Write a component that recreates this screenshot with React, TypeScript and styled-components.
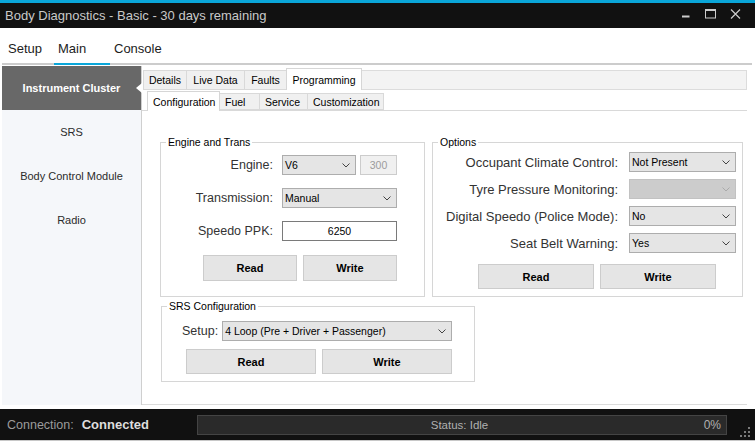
import React from "react";
import styled, { createGlobalStyle, css } from "styled-components";

const GlobalStyle = createGlobalStyle`
  html, body { margin: 0; padding: 0; background: #ffffff; }
  body { font-family: "Liberation Sans", Arial, sans-serif; }
  * { box-sizing: border-box; }
`;

const CYAN = "#0aa6d9";

const Window = styled.div`
  width: 755px;
  height: 441px;
  display: flex;
  flex-direction: column;
  background: #fff;
  overflow: hidden;
`;

const TitleBar = styled.div`
  height: 28px;
  border-top: 3px solid ${CYAN};
  background: #111111;
  display: flex;
  align-items: center;
  justify-content: space-between;
  padding-left: 5px;
  padding-right: 7px;
`;

const Title = styled.div`
  color: #c9c9c9;
  font-size: 13px;
  white-space: nowrap;
`;

const WinButtons = styled.div`
  display: flex;
  align-self: stretch;
`;

const WinButton = styled.div`
  width: 25px;
  display: flex;
  justify-content: center;
  padding-top: 6px;
`;

const MenuBar = styled.div`
  height: 37px;
  margin: 0 3px 0 2px;
  padding-left: 2px;
  border-bottom: 2px solid #cccccc;
  display: flex;
`;

const MenuItem = styled.div<{ $w?: number; $active?: boolean }>`
  ${(p) => (p.$w ? `width: ${p.$w}px;` : "")}
  padding: 5px 0 0 4px;
  margin-bottom: -2px;
  display: flex;
  align-items: center;
  font-size: 13px;
  color: #1c1c1c;
  border-bottom: 2px solid ${(p) => (p.$active ? CYAN : "transparent")};
`;

const Body = styled.div`
  display: flex;
  height: 340px;
  padding-top: 1px;
  margin: 0 8px 4px 2px;
`;

const Sidebar = styled.div`
  width: 140px;
  background: #f5f7fa;
  border-right: 1px solid #cfcfcf;
  display: flex;
  flex-direction: column;
`;

const SideItem = styled.div<{ $active?: boolean }>`
  position: relative;
  height: 44px;
  display: flex;
  align-items: center;
  justify-content: center;
  font-size: 11px;
  color: #2b2b2b;
  ${(p) =>
    p.$active &&
    css`
      background: #686868;
      color: #ffffff;
      font-weight: bold;
      &::after {
        content: "";
        position: absolute;
        right: -1px;
        top: 50%;
        transform: translateY(-50%);
        border-top: 5px solid transparent;
        border-bottom: 5px solid transparent;
        border-right: 6px solid #ffffff;
      }
    `}
`;

const MainPanel = styled.div`
  flex: 1;
  display: flex;
  flex-direction: column;
  padding-top: 2px;
`;

const TopTabRow = styled.div`
  display: flex;
  align-items: flex-start;
  height: 22px;
  padding-left: 1px;
`;

const TopTab = styled.div<{ $active?: boolean; $w: number }>`
  width: ${(p) => p.$w}px;
  display: flex;
  align-items: center;
  justify-content: center;
  font-size: 10.5px;
  color: #000;
  white-space: nowrap;
  ${(p) =>
    p.$active
      ? css`
          height: 22px;
          background: #ffffff;
          border: 1px solid #d6d6d6;
          border-bottom: none;
        `
      : css`
          margin-top: 2px;
          height: 20px;
          background: #f0f0f0;
          border: 1px solid #d9d9d9;
          border-right: none;
        `}
`;

const TabFiller = styled.div`
  flex: 1;
  margin-top: 2px;
  height: 20px;
  background: #f3f3f3;
  border: 1px solid #dcdcdc;
  border-left: none;
`;

const SubTabRow = styled.div`
  display: flex;
  align-items: flex-start;
  height: 20px;
  margin-top: 1px;
  padding-left: 5px;
  border-bottom: 1px solid #d9d9d9;
`;

const SubTab = styled.div<{ $active?: boolean; $w: number }>`
  width: ${(p) => p.$w}px;
  display: flex;
  align-items: center;
  font-size: 10.5px;
  color: #000;
  white-space: nowrap;
  padding-left: 5px;
  ${(p) =>
    p.$active
      ? css`
          height: 20px;
          background: #ffffff;
          border: 1px solid #d6d6d6;
          border-bottom: none;
        `
      : css`
          margin-top: 2px;
          height: 17px;
          background: #f0f0f0;
          border: 1px solid #d9d9d9;
          border-left: none;
        `}
`;

const Page = styled.div`
  flex: 1;
  border-bottom: 1px solid #dcdcdc;
  padding: 25px 0 0 18px;
  display: flex;
  flex-direction: column;
`;

const GroupRow = styled.div`
  display: flex;
  gap: 7px;
`;

const Group = styled.fieldset<{ $w: number; $h: number; $mt?: number; $ml?: number }>`
  margin: ${(p) => p.$mt ?? 0}px 0 0 ${(p) => p.$ml ?? 0}px;
  padding: 0;
  min-width: 0;
  width: ${(p) => p.$w}px;
  height: ${(p) => p.$h}px;
  border: 1px solid #d6d6d6;
`;

const Legend = styled.legend`
  margin-left: 5px;
  padding: 0 2px;
  font-size: 10.5px;
  line-height: 13px;
  color: #000;
`;

const FormGrid = styled.div<{ $cols: string; $pl: number; $pt: number; $gap: number; $cg: number }>`
  display: grid;
  grid-template-columns: ${(p) => p.$cols};
  column-gap: ${(p) => p.$cg}px;
  row-gap: ${(p) => p.$gap}px;
  align-items: center;
  padding: ${(p) => p.$pt}px 0 0 ${(p) => p.$pl}px;
`;

const FieldLabel = styled.span<{ $size?: number }>`
  font-size: ${(p) => p.$size ?? 12.5}px;
  color: #333333;
  text-align: right;
  white-space: nowrap;
`;

const SelectBox = styled.div<{ $w?: number; $disabled?: boolean }>`
  height: 20px;
  ${(p) => (p.$w ? `width: ${p.$w}px;` : "")}
  display: flex;
  align-items: center;
  justify-content: space-between;
  padding: 0 5px 0 2px;
  font-size: 10.5px;
  color: #000;
  white-space: nowrap;
  background: ${(p) => (p.$disabled ? "#cccccc" : "#e5e5e5")};
  border: 1px solid ${(p) => (p.$disabled ? "#c2c2c2" : "#adadad")};
`;

const InlineRow = styled.div<{ $gap: number }>`
  display: flex;
  align-items: center;
  gap: ${(p) => p.$gap}px;
`;

const TextBox = styled.div<{ $w?: number; $disabled?: boolean }>`
  height: 20px;
  ${(p) => (p.$w ? `width: ${p.$w}px;` : "")}
  display: flex;
  align-items: center;
  justify-content: center;
  font-size: 10.5px;
  color: ${(p) => (p.$disabled ? "#9c9c9c" : "#000")};
  background: ${(p) => (p.$disabled ? "#f0f0f0" : "#ffffff")};
  border: 1px solid ${(p) => (p.$disabled ? "#cccccc" : "#7a7a7a")};
`;

const ButtonRow = styled.div<{ $pl: number; $mt: number; $span?: boolean }>`
  display: flex;
  gap: 6px;
  padding-left: ${(p) => p.$pl}px;
  margin-top: ${(p) => p.$mt}px;
  ${(p) => (p.$span ? "grid-column: 1 / -1;" : "")}
`;

const Button = styled.div<{ $w: number; $h?: number }>`
  width: ${(p) => p.$w}px;
  height: ${(p) => p.$h ?? 25}px;
  display: flex;
  align-items: center;
  justify-content: center;
  font-size: 11px;
  font-weight: bold;
  color: #000;
  background: #e5e5e5;
  border: 1px solid #cccccc;
`;

const SrsBody = styled.div`
  display: flex;
  flex-direction: column;
  padding: 8px 0 0 20px;
`;

const StatusBar = styled.div`
  height: 32px;
  background: #111111;
  border-bottom: 1px solid #c8c8c8;
  display: flex;
  align-items: center;
  padding-left: 7px;
`;

const ConnLabel = styled.span`
  font-size: 12.5px;
  color: #9b9b9b;
`;

const ConnValue = styled.span`
  margin-left: 8px;
  font-size: 13px;
  font-weight: bold;
  color: #dedede;
`;

const Progress = styled.div`
  margin-left: auto;
  width: 530px;
  height: 20px;
  background: #2a2a2a;
  border: 1px solid #444444;
  display: grid;
  grid-template-columns: 1fr auto 1fr;
  align-items: center;
  padding-right: 5px;
  font-size: 11.5px;
  color: #b0b0b0;
`;

const Percent = styled.span`
  justify-self: end;
  font-size: 12px;
`;

const Grip = styled.svg`
  align-self: flex-end;
  margin: 0 5px 3px 13px;
`;

const Chevron = ({ light }: { light?: boolean }) => (
  <svg width="8" height="5" viewBox="0 0 8 5">
    <polyline points="0.5,0.5 4,4 7.5,0.5" fill="none" stroke={light ? "#aaaaaa" : "#444444"} strokeWidth="1" />
  </svg>
);

const Select = ({ value, w, disabled }: { value: string; w?: number; disabled?: boolean }) => (
  <SelectBox $w={w} $disabled={disabled}>
    <span>{value}</span>
    <Chevron light={disabled} />
  </SelectBox>
);

export default function App() {
  return (
    <>
      <GlobalStyle />
      <Window>
        <TitleBar>
          <Title>Body Diagnostics - Basic - 30 days remaining</Title>
          <WinButtons>
            <WinButton>
              <svg width="11" height="11" viewBox="0 0 11 11">
                <rect x="2" y="6.5" width="7.5" height="2" fill="#cccccc" />
              </svg>
            </WinButton>
            <WinButton>
              <svg width="11" height="11" viewBox="0 0 11 11">
                <rect x="0.5" y="0.5" width="10" height="8.5" fill="none" stroke="#cccccc" />
                <rect x="0" y="0" width="11" height="2" fill="#cccccc" />
              </svg>
            </WinButton>
            <WinButton>
              <svg width="11" height="11" viewBox="0 0 11 11">
                <path d="M1 0.5 L10 9.5 M10 0.5 L1 9.5" stroke="#cccccc" strokeWidth="1.2" />
              </svg>
            </WinButton>
          </WinButtons>
        </TitleBar>

        <MenuBar>
          <MenuItem $w={50}>Setup</MenuItem>
          <MenuItem $w={56} $active>Main</MenuItem>
          <MenuItem>Console</MenuItem>
        </MenuBar>

        <Body>
          <Sidebar>
            <SideItem $active>Instrument Cluster</SideItem>
            <SideItem>SRS</SideItem>
            <SideItem>Body Control Module</SideItem>
            <SideItem>Radio</SideItem>
          </Sidebar>

          <MainPanel>
            <TopTabRow>
              <TopTab $w={43}>Details</TopTab>
              <TopTab $w={58}>Live Data</TopTab>
              <TopTab $w={42}>Faults</TopTab>
              <TopTab $w={76} $active>Programming</TopTab>
              <TabFiller />
            </TopTabRow>
            <SubTabRow>
              <SubTab $w={73} $active>Configuration</SubTab>
              <SubTab $w={40}>Fuel</SubTab>
              <SubTab $w={48}>Service</SubTab>
              <SubTab $w={76}>Customization</SubTab>
            </SubTabRow>

            <Page>
              <GroupRow>
                <Group $w={265} $h={161}>
                  <Legend>Engine and Trans</Legend>
                  <FormGrid $cols="101px 115px" $pl={11} $pt={6} $gap={13} $cg={9}>
                    <FieldLabel>Engine:</FieldLabel>
                    <InlineRow $gap={4}>
                      <Select value="V6" w={74} />
                      <TextBox $w={37} $disabled>300</TextBox>
                    </InlineRow>
                    <FieldLabel>Transmission:</FieldLabel>
                    <Select value="Manual" />
                    <FieldLabel>Speedo PPK:</FieldLabel>
                    <TextBox>6250</TextBox>
                    <ButtonRow $pl={31} $mt={1} $span>
                      <Button $w={94} $h={26}>Read</Button>
                      <Button $w={94} $h={26}>Write</Button>
                    </ButtonRow>
                  </FormGrid>
                </Group>

                <Group $w={311} $h={161}>
                  <Legend>Options</Legend>
                  <FormGrid $cols="175px 107px" $pl={10} $pt={3} $gap={7} $cg={11}>
                    <FieldLabel $size={13}>Occupant Climate Control:</FieldLabel>
                    <Select value="Not Present" />
                    <FieldLabel $size={13}>Tyre Pressure Monitoring:</FieldLabel>
                    <Select value="" disabled />
                    <FieldLabel $size={13}>Digital Speedo (Police Mode):</FieldLabel>
                    <Select value="No" />
                    <FieldLabel $size={13}>Seat Belt Warning:</FieldLabel>
                    <Select value="Yes" />
                    <ButtonRow $pl={35} $mt={4} $span>
                      <Button $w={116}>Read</Button>
                      <Button $w={116}>Write</Button>
                    </ButtonRow>
                  </FormGrid>
                </Group>
              </GroupRow>

              <Group $w={314} $h={82} $mt={3} $ml={1}>
                <Legend>SRS Configuration</Legend>
                <SrsBody>
                  <InlineRow $gap={4}>
                    <FieldLabel>Setup:</FieldLabel>
                    <Select value="4 Loop (Pre + Driver + Passenger)" w={230} />
                  </InlineRow>
                  <ButtonRow $pl={4} $mt={8}>
                    <Button $w={130}>Read</Button>
                    <Button $w={130}>Write</Button>
                  </ButtonRow>
                </SrsBody>
              </Group>
            </Page>
          </MainPanel>
        </Body>

        <StatusBar>
          <ConnLabel>Connection:</ConnLabel>
          <ConnValue>Connected</ConnValue>
          <Progress>
            <span />
            <span>Status: Idle</span>
            <Percent>0%</Percent>
          </Progress>
          <Grip width="10" height="10" viewBox="0 0 10 10">
            <rect x="8" y="0" width="2" height="2" fill="#7a7a7a" />
            <rect x="4" y="4" width="2" height="2" fill="#7a7a7a" />
            <rect x="8" y="4" width="2" height="2" fill="#7a7a7a" />
            <rect x="0" y="8" width="2" height="2" fill="#7a7a7a" />
            <rect x="4" y="8" width="2" height="2" fill="#7a7a7a" />
            <rect x="8" y="8" width="2" height="2" fill="#7a7a7a" />
          </Grip>
        </StatusBar>
      </Window>
    </>
  );
}
